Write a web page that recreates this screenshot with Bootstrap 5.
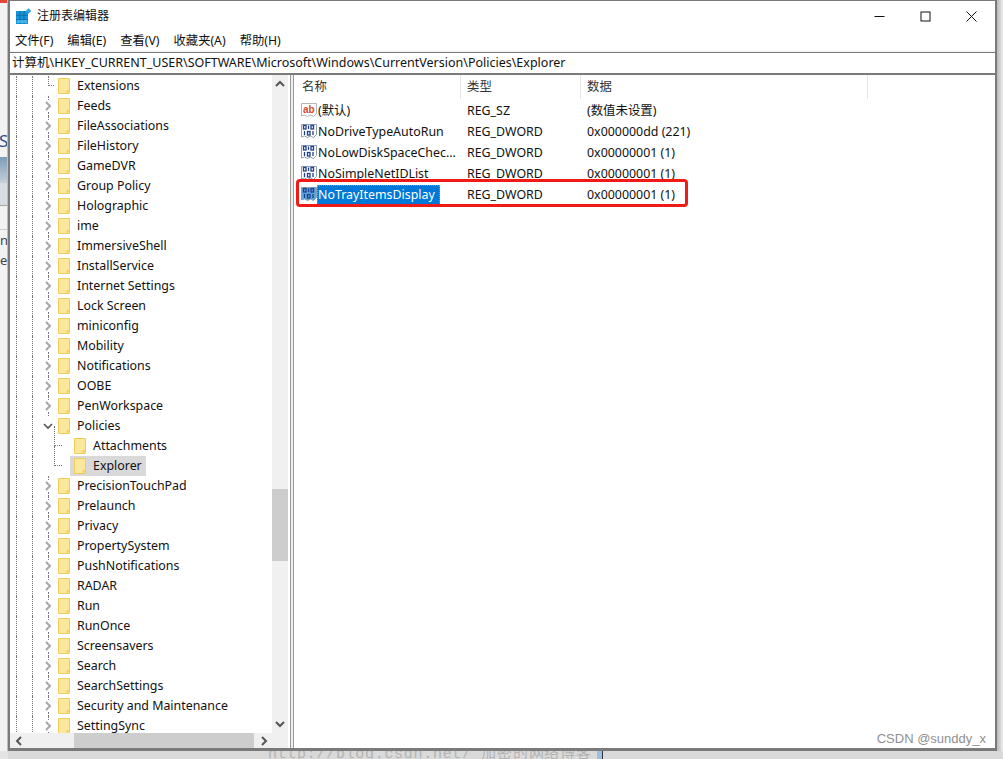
<!DOCTYPE html>
<html lang="zh-CN"><head><meta charset="utf-8"><title>注册表编辑器</title>
<link rel="stylesheet" href="https://cdn.jsdelivr.net/npm/bootstrap@5.3.0/dist/css/bootstrap.min.css">
<style>
html,body{width:1003px;height:759px;overflow:hidden;margin:0;background:#e4e4e4;}
body{font-family:"Noto Sans","Noto Sans CJK SC",sans-serif;font-size:12.4px;color:#111;line-height:20px;}
.stage{height:759px;}
.strip-left{width:8px;flex:none;background:#f3f3f3;overflow:hidden;border-right:1px solid #bdbdbd;}
.strip-left i{display:block;font-style:normal;overflow:hidden;white-space:nowrap;}
.sl-red{height:3px;background:#e0463a;}
.sl-a{height:127px;}
.sl-s{height:27px;font-size:17px;line-height:22px;color:#2a4f86;margin-left:-1px;}
.sl-b{height:26px;background:linear-gradient(#7e9cb8,#c4cfda);}
.sl-c{height:23px;background:#d8dce3;border-bottom:1px solid #a6a6a6;}
.sl-d{height:24px;border-bottom:1px solid #ccc;}
.sl-t{height:20px;font-size:13px;line-height:20px;color:#444;}
.sl-e{height:480px;}
.win{width:989px;flex:none;height:751px;background:#fff;border:2px solid #7a7a7a;border-width:1px 2px 3px 2px;}
.shadow-right{flex:1;background:linear-gradient(90deg,#b9b9b9,#eeeeee);}
.ttl{height:30px;padding-left:6px;}
.ttl-t{font-size:12px;margin-left:5px;}
.ttl-btns svg{display:block;}
.wb{width:46px;height:30px;}
.wb-last{margin-right:1px;}
.menus{height:21px;padding-left:5px;gap:14px;font-size:12.3px;background:#fff;border-bottom:1px solid #f0f0f0;}
.addr{height:23px;border:2px solid #7a7a7a;border-width:1px 0 2px 0;background:#fff;padding-left:2px;font-size:12.5px;line-height:20px;white-space:nowrap;overflow:hidden;}
.panes{height:673px;}
.treepane{width:278px;flex:none;position:relative;overflow:hidden;}
.treebody{width:262px;flex:none;height:658px;overflow:hidden;padding-top:1px;}
.trow{height:20px;white-space:nowrap;}
.guide{width:1px;flex:none;height:20px;border-left:1px dotted #777;}
.g1{margin-left:6px;}
.g2{margin-left:15px;}
.chev{width:10px;height:20px;flex:none;margin-left:10px;position:relative;}
.chev svg{display:block;position:absolute;top:5px;left:0;}
.chev.ln::before,.chev.ln::after{content:"";position:absolute;left:5px;height:4px;border-left:1px dotted #777;}
.chev.ln::before{top:0;}
.chev.ln::after{bottom:0;}
.hook{position:absolute;left:5px;top:0;height:10px;width:6px;border-left:1px dotted #777;border-bottom:1px dotted #777;}
.subsp{width:36px;height:20px;flex:none;position:relative;}
.subsel{width:37px;}
.hook2{position:absolute;left:21px;top:-10px;height:20px;width:8px;border-left:1px dotted #777;border-bottom:1px dotted #777;}
.fold{width:12px;height:16px;flex:none;margin:0 6px 0 5px;}
.fold svg{display:block;margin-top:2px;}
.lbl{padding:0 1px;}
.selwrap{background:#d9d9d9;padding-right:3px;}
.selwrap .fold{margin-left:4px;}
.vbar{width:16px;flex:none;background:#f0f0f0;height:658px;}
.thumb-v{height:72px;background:#cdcdcd;margin-top:414px;}
.hbar{height:15px;background:#f0f0f0;}
.thumb-h{width:180px;height:15px;background:#cdcdcd;margin-left:64px;}
.split{width:4px;flex:none;margin:0 1px 0 2px;background:#eee;border-left:1px solid #9a9a9a;border-right:1px solid #9a9a9a;}
.listpane{flex:1;position:relative;min-width:0;}
.hdr{height:25px;color:#333;}
.hc{border-right:1px solid #e5e5e5;padding-left:6px;height:24px;line-height:24px;}
.c1{width:166px;flex:none;padding-left:7px;}
.c2{width:120px;flex:none;}
.c3{width:287px;flex:none;}
.lrow{height:21px;line-height:21px;white-space:nowrap;padding-left:6px;}
.lrow svg{flex:none;display:block;margin-top:2px;}
.name{width:150px;flex:none;}
.typ{width:120px;flex:none;}
.nm{padding:1px 5px 2px 1px;display:inline-block;line-height:17px;}
.active-nm{background:#0078d7;color:#fff;outline:1px dotted #e08a1e;outline-offset:-1px;}
.redbox{position:absolute;left:1px;top:104px;width:392px;height:28px;border:3px solid #f01a16;border-radius:4px;pointer-events:none;}
.wm{position:absolute;right:9px;bottom:0;font-family:"Liberation Sans",sans-serif;font-size:13px;color:#8f8f8f;line-height:18px;}
.bot{height:8px;background:#dadada;margin-left:8px;font-family:"Liberation Mono",monospace;font-size:15px;line-height:8px;color:#b4b4b4;padding-left:260px;overflow:hidden;white-space:nowrap;}
.bot-txt{width:327px;flex:none;letter-spacing:.7px;overflow:hidden;}
.bot-tab{width:6px;height:8px;background:#9cc0de;flex:none;border-right:1px solid #334;margin-left:2px;}
</style></head>
<body>
<div class="stage">
<div class="d-flex">
<div class="strip-left">
<i class="sl-red"></i><i class="sl-a"></i><i class="sl-s">S</i><i class="sl-b"></i><i class="sl-c"></i><i class="sl-d"></i><i class="sl-t">n</i><i class="sl-t">e</i><i class="sl-e"></i>
</div>
<div class="win d-flex flex-column">
<div class="ttl d-flex align-items-center">
<svg width="16" height="16" viewBox="0 0 16 16"><rect x="0" y="3" width="12" height="13" fill="#1296dc"/><path d="M4 3v13M8 3v13M0 7.300h12M0 11.600h12" stroke="#0a6fb0" stroke-width="1"/><rect x="1" y="12" width="10" height="3" fill="#5cc0f0" opacity=".7"/><rect x="10.500" y="1" width="4" height="4" transform="rotate(45 12.500 3)" fill="#2fa6e0"/></svg>
<span class="ttl-t">注册表编辑器</span>
<div class="ms-auto d-flex ttl-btns">
<div class="wb d-flex align-items-center justify-content-center"><svg width="11" height="11" viewBox="0 0 11 11"><path d="M0.500 5.500h10" stroke="#111" stroke-width="1"/></svg></div>
<div class="wb d-flex align-items-center justify-content-center"><svg width="11" height="11" viewBox="0 0 11 11"><rect x="1" y="1" width="9" height="9" fill="none" stroke="#111" stroke-width="1"/></svg></div>
<div class="wb wb-last d-flex align-items-center justify-content-center"><svg width="11" height="11" viewBox="0 0 11 11"><path d="M.5.5l10 10M10.500.5l-10 10" stroke="#111" stroke-width="1"/></svg></div>
</div>
</div>
<div class="menus d-flex align-items-center"><span>文件(F)</span><span>编辑(E)</span><span>查看(V)</span><span>收藏夹(A)</span><span>帮助(H)</span></div>
<div class="addr">计算机\HKEY_CURRENT_USER\SOFTWARE\Microsoft\Windows\CurrentVersion\Policies\Explorer</div>
<div class="panes d-flex">
<div class="treepane d-flex flex-column">
<div class="d-flex">
<div class="treebody" id="tree"></div>
<div class="vbar d-flex flex-column position-relative">
<svg class="position-absolute top-0 start-0 mt-1" style="margin-left:3px" width="10" height="10" viewBox="0 0 10 10"><path d="M1 7l4-4 4 4" fill="none" stroke="#555" stroke-width="2"/></svg>
<div class="thumb-v"></div>
<svg class="position-absolute bottom-0 start-0 mb-1" style="margin-left:3px" width="10" height="10" viewBox="0 0 10 10"><path d="M1 3l4 4 4-4" fill="none" stroke="#555" stroke-width="2"/></svg>
</div>
</div>
<div class="hbar d-flex align-items-center position-relative">
<div class="thumb-h"></div>
<svg class="position-absolute start-0" style="margin-left:4px" width="10" height="10" viewBox="0 0 10 10"><path d="M7 1L3 5l4 4" fill="none" stroke="#555" stroke-width="2"/></svg>
<svg class="position-absolute" style="left:249px" width="10" height="10" viewBox="0 0 10 10"><path d="M3 1l4 4-4 4" fill="none" stroke="#555" stroke-width="2"/></svg>
</div>
</div>
<div class="split"></div>
<div class="listpane">
<div class="hdr d-flex"><div class="hc c1">名称</div><div class="hc c2">类型</div><div class="hc c3">数据</div></div>
<div id="list"></div>
<div class="redbox"></div>
<div class="wm">CSDN @sunddy_x</div>
</div>
</div>
</div>
<div class="shadow-right"></div>
</div>
<div class="bot d-flex"><span class="bot-txt">http://blog.csdn.net/ 加密的网络博客</span><div class="bot-tab"></div></div>
</div>
<script>
var names=[["Extensions",0],["Feeds",1],["FileAssociations",1],["FileHistory",1],["GameDVR",1],["Group Policy",1],["Holographic",1],["ime",1],["ImmersiveShell",1],["InstallService",1],["Internet Settings",1],["Lock Screen",1],["miniconfig",1],["Mobility",1],["Notifications",1],["OOBE",1],["PenWorkspace",1],["Policies",2],["Attachments",3],["Explorer",4],["PrecisionTouchPad",1],["Prelaunch",1],["Privacy",1],["PropertySystem",1],["PushNotifications",1],["RADAR",1],["Run",1],["RunOnce",1],["Screensavers",1],["Search",1],["SearchSettings",1],["Security and Maintenance",1],["SettingSync",1]];
var folder='<svg width="12" height="16" viewBox="0 0 12 16"><path d="M.5.5h11v15H.5z" fill="#fde79c" stroke="#f0cd58"/><path d="M9 15.500v-3h2.500" fill="#f6d667" stroke="#f0cd58"/></svg>';
var h='';
names.forEach(function(n){
var k=n[1],head='<div class="trow d-flex"><div class="guide g1"></div><div class="guide g2"></div>',body;
if(k==0)body='<div class="chev"><div class="hook"></div></div>';
if(k==1)body='<div class="chev ln"><svg width="10" height="10" viewBox="0 0 10 10"><path d="M3 1l4 4-4 4" fill="none" stroke="#a6a6a6" stroke-width="2"/></svg></div>';
if(k==2)body='<div class="chev"><svg width="10" height="10" viewBox="0 0 10 10"><path d="M1 3l4 4 4-4" fill="none" stroke="#555" stroke-width="1.600"/></svg></div>';
if(k==3)body='<div class="subsp"><div class="hook2"></div></div>';
if(k==4)body='<div class="subsp subsel"><div class="hook2"></div></div>';
var f='<div class="fold">'+folder+'</div><span class="lbl">'+n[0]+'</span>';
if(k==4)f='<div class="selwrap d-flex">'+f+'</div>';
h+=head+body+f+'</div>';
});
document.getElementById('tree').innerHTML=h;
var rows=[["(默认)","REG_SZ","(数值未设置)",0],["NoDriveTypeAutoRun","REG_DWORD","0x000000dd (221)",1],["NoLowDiskSpaceChec...","REG_DWORD","0x00000001 (1)",1],["NoSimpleNetIDList","REG_DWORD","0x00000001 (1)",1],["NoTrayItemsDisplay","REG_DWORD","0x00000001 (1)",2]];
var ab='<svg width="16" height="16" viewBox="0 0 16 16"><path d="M.5 1.500h15v10l-3 3-3-1.500-3 1.500-3-1.500-3 1z" fill="#fff" stroke="#b5b5b5"/><text x="2" y="10.500" font-size="10" font-weight="700" fill="#d8482c" font-family="Liberation Sans">ab</text></svg>';
function bin(sel){return '<svg width="16" height="16" viewBox="0 0 16 16"><path d="M.5 1.500h15v10l-3 3-3-1.500-3 1.500-3-1.500-3 1z" fill="'+(sel?'#5aa6e0':'#fff')+'" stroke="#8a9fb5"/><g fill="none" stroke="#1f3f8a" stroke-width="1.300"><rect x="2.500" y="2.500" width="2.500" height="3.500"/><path d="M7.500 2.500v3.500"/><rect x="10" y="2.500" width="2.500" height="3.500"/><path d="M3.500 8v4"/><rect x="6.500" y="8.500" width="2.500" height="3.500"/><path d="M12 8v4"/></g></svg>';}
var l='';
rows.forEach(function(r){
l+='<div class="lrow d-flex">'+(r[3]?bin(r[3]==2):ab)+'<div class="name"><span class="nm'+(r[3]==2?' active-nm':'')+'">'+r[0]+'</span></div><div class="typ">'+r[1]+'</div><div>'+r[2]+'</div></div>';
});
document.getElementById('list').innerHTML=l;
</script>
<script src="https://cdn.jsdelivr.net/npm/bootstrap@5.3.0/dist/js/bootstrap.bundle.min.js"></script>
</body></html>
